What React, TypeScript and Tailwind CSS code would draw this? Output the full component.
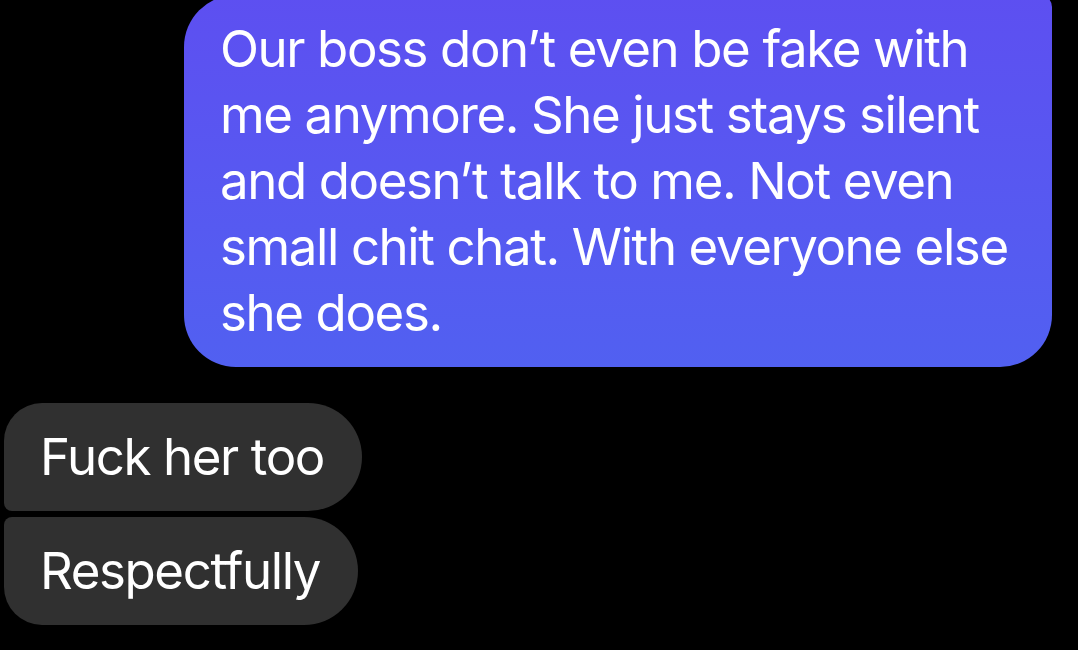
import React from 'react';

const lines = [
  'Our boss don’t even be fake with',
  'me anymore. She just stays silent',
  'and doesn’t talk to me. Not even',
  'small chit chat. With everyone else',
  'she does.',
];

export default function App() {
  return (
    <div className="w-[1078px] h-[650px] overflow-hidden bg-black font-['Inter',sans-serif] text-white [font-variant-ligatures:none]">
      <div className="flex flex-col">
        {/* Sent message */}
        <div className="flex justify-end pr-[26px] -mt-[5px]">
          <div className="w-[868px] rounded-[52px] rounded-tr-[12px] bg-gradient-to-b from-[#5d4ff1] to-[#5160f1] pl-[36px] pr-[20px] py-[21px] text-[51px] leading-[66px] tracking-[-1.4px]">
            {lines.map((l, i) => (
              <p key={i} className="whitespace-nowrap">{l}</p>
            ))}
          </div>
        </div>

        {/* Received messages */}
        <div className="mt-[36px] flex flex-col items-start gap-[6px] pl-[4px]">
          <div className="rounded-r-[54px] rounded-tl-[38px] rounded-bl-[8px] bg-[#303030] pl-[36px] pr-[38px] py-[21px] text-[51px] leading-[66px] tracking-[-1.4px]">
            Fuck her too
          </div>
          <div className="rounded-r-[54px] rounded-bl-[38px] rounded-tl-[8px] bg-[#303030] pl-[36px] pr-[38px] py-[21px] text-[51px] leading-[66px] tracking-[-1.4px]">
            Respectfully
          </div>
        </div>
      </div>
    </div>
  );
}
